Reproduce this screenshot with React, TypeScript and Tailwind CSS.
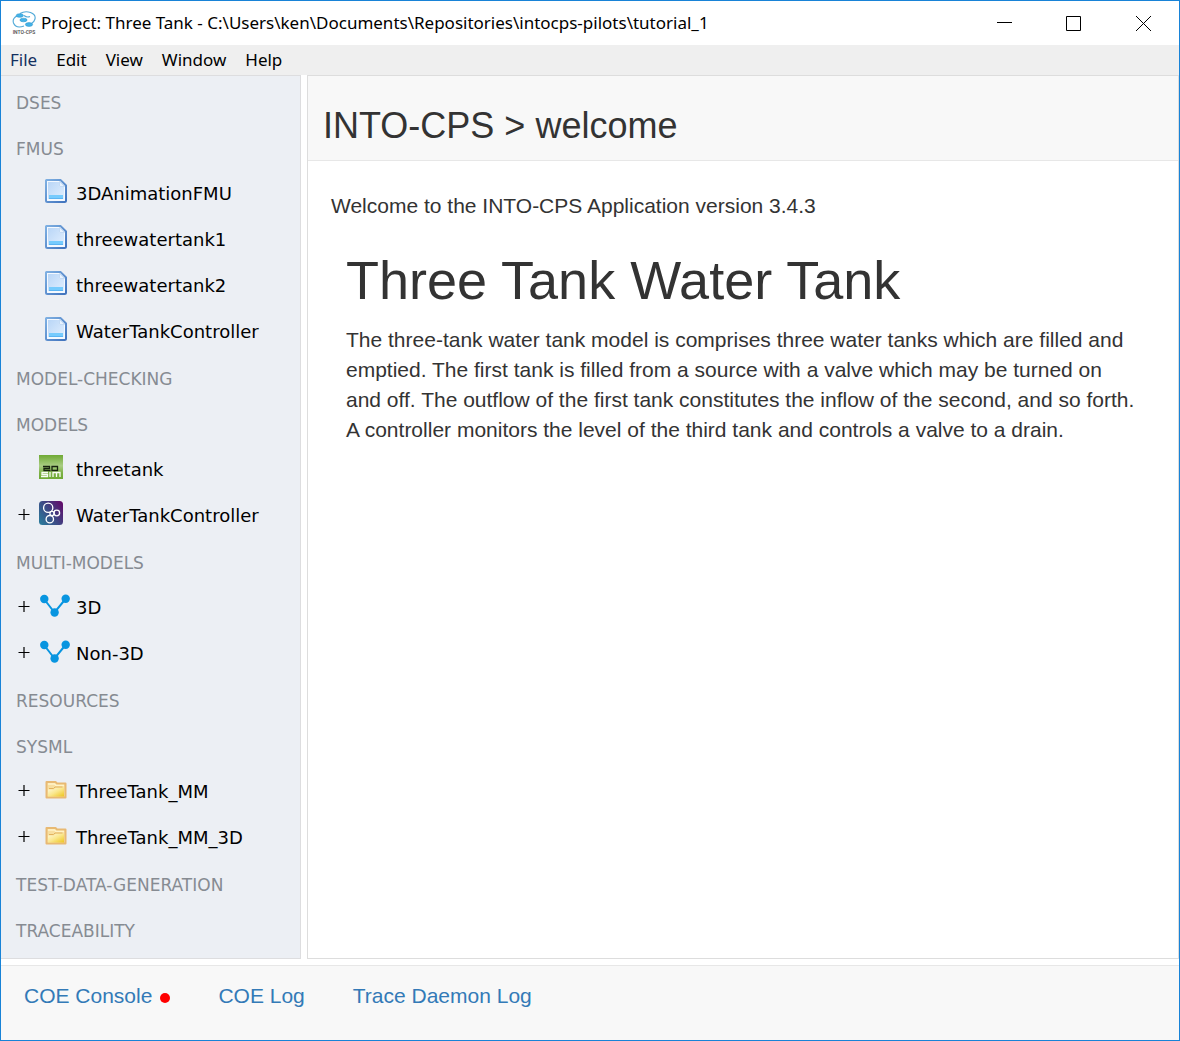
import React from "react";

type IconName = "file" | "sim" | "overture" | "graph" | "folder";
type Item = { label: string; icon: IconName; expandable?: boolean };
type Group = { title: string; items: Item[] };

const groups: Group[] = [
  { title: "DSES", items: [] },
  {
    title: "FMUS",
    items: [
      { label: "3DAnimationFMU", icon: "file" },
      { label: "threewatertank1", icon: "file" },
      { label: "threewatertank2", icon: "file" },
      { label: "WaterTankController", icon: "file" },
    ],
  },
  { title: "MODEL-CHECKING", items: [] },
  {
    title: "MODELS",
    items: [
      { label: "threetank", icon: "sim" },
      { label: "WaterTankController", icon: "overture", expandable: true },
    ],
  },
  {
    title: "MULTI-MODELS",
    items: [
      { label: "3D", icon: "graph", expandable: true },
      { label: "Non-3D", icon: "graph", expandable: true },
    ],
  },
  { title: "RESOURCES", items: [] },
  {
    title: "SYSML",
    items: [
      { label: "ThreeTank_MM", icon: "folder", expandable: true },
      { label: "ThreeTank_MM_3D", icon: "folder", expandable: true },
    ],
  },
  { title: "TEST-DATA-GENERATION", items: [] },
  { title: "TRACEABILITY", items: [] },
];

function FileIcon() {
  return (
    <svg width="22" height="24" viewBox="0 0 22 24" className="ml-1.5" aria-hidden="true">
      <defs>
        <linearGradient id="page" x1="0" y1="0" x2="1" y2="1">
          <stop offset="0" stopColor="#b9d6f7" />
          <stop offset="1" stopColor="#e0eefe" />
        </linearGradient>
        <linearGradient id="pageEdge" x1="0" y1="0" x2="1" y2="1">
          <stop offset="0" stopColor="#7fb0e2" />
          <stop offset="1" stopColor="#3f72bd" />
        </linearGradient>
      </defs>
      <path d="M1.500 1H15.500L21 6.500V21.500Q21 23 19.500 23H2.500Q1 23 1 21.500V1.500Z" fill="#f4f9ff" stroke="url(#pageEdge)" strokeWidth="2" />
      <path d="M3 3H14V8H19V20H3Z" fill="url(#page)" />
      <path d="M14.500 2.500V7.500H19.500Z" fill="#e8f2fe" stroke="#c4dbf5" />
      <path d="M4 16H18V20H4Z" fill="#76cbfd" />
      <path d="M4 19.500H18" stroke="#5cb4f2" />
    </svg>
  );
}

function SimIcon() {
  return (
    <svg width="24" height="24" viewBox="0 0 24 24" aria-hidden="true">
      <defs>
        <linearGradient id="simGreen" x1="0" y1="0" x2="0" y2="1">
          <stop offset="0" stopColor="#6fa934" />
          <stop offset="0.45" stopColor="#a9cd83" />
          <stop offset="0.75" stopColor="#7bb044" />
          <stop offset="1" stopColor="#6faa35" />
        </linearGradient>
      </defs>
      <rect width="24" height="24" fill="url(#simGreen)" />
      <path d="M4 11.500H10.500V13.500H5V15.500H11.500M13 11.500H18.500V15.500H13Z" fill="none" stroke="#17220f" strokeWidth="1.300" />
      <path d="M9 17.500H3V19.500H8.500V21.500H2M11 17V22M14 22V17.500H21V22M17.500 17.500V22" fill="none" stroke="#f8fcf3" strokeWidth="1.300" />
    </svg>
  );
}

function OvertureIcon() {
  return (
    <svg width="24" height="24" viewBox="0 0 24 24" aria-hidden="true">
      <defs>
        <linearGradient id="overture" x1="0" y1="0.8" x2="1" y2="0.1">
          <stop offset="0" stopColor="#2c7799" />
          <stop offset="0.5" stopColor="#3f4583" />
          <stop offset="1" stopColor="#620969" />
        </linearGradient>
      </defs>
      <rect width="24" height="24" rx="3.500" fill="url(#overture)" />
      <g fill="none" stroke="#fff" strokeWidth="1.300">
        <circle cx="9.200" cy="6.800" r="4.600" />
        <circle cx="13" cy="12.500" r="2.100" />
        <circle cx="17.800" cy="12" r="2.800" />
        <circle cx="10.800" cy="18.200" r="3.700" />
      </g>
    </svg>
  );
}

function GraphIcon() {
  return (
    <svg width="30" height="24" viewBox="0 0 30 24" className="ml-px" aria-hidden="true">
      <path d="M4 6L14.500 19.500L25.500 6" fill="none" stroke="#0895e0" strokeWidth="2" />
      <g fill="#0895e0">
        <circle cx="4.300" cy="6" r="4.200" />
        <circle cx="25.700" cy="5.700" r="4.200" />
        <circle cx="14.600" cy="19.500" r="4.200" />
      </g>
    </svg>
  );
}

function FolderIcon() {
  return (
    <svg width="22" height="24" viewBox="0 0 22 24" className="ml-1.5" aria-hidden="true">
      <defs>
        <linearGradient id="folder" x1="0" y1="0" x2="1" y2="1">
          <stop offset="0" stopColor="#fffbe0" />
          <stop offset="0.5" stopColor="#fae78d" />
          <stop offset="1" stopColor="#edc51e" />
        </linearGradient>
      </defs>
      <path d="M1.500 5H10.500L12 6.500H20.500V20.500H1.500Z" fill="#f8dfa0" stroke="#e8b973" strokeWidth="2" strokeLinejoin="round" />
      <path d="M3 7H9.500L11 8.500H19" fill="none" stroke="#fff3c8" strokeWidth="1.500" />
      <path d="M3 12.500H9L11 10.500H19V19.500H3Z" fill="url(#folder)" />
      <path d="M4 11.500H8.500L10 10H17.500" fill="none" stroke="#e2b35c" />
    </svg>
  );
}

const icons: Record<IconName, () => React.JSX.Element> = {
  file: FileIcon,
  sim: SimIcon,
  overture: OvertureIcon,
  graph: GraphIcon,
  folder: FolderIcon,
};

function Logo() {
  return (
    <div className="flex w-6 shrink-0 flex-col items-center">
      <svg width="24" height="18" viewBox="0 0 24 18" aria-hidden="true">
        <g fill="none" stroke="#50a9d8" strokeWidth="1.100">
          <path d="M8 2.500Q13 -0.500 18.500 1.500Q24 3.500 23 8Q22 11.500 19.500 12.500" />
          <path d="M5 5Q0 7.500 1.500 12Q4 18 12 15" />
          <path d="M12 4.500Q15 7 18 5.500" />
        </g>
        <g fill="#43b2e8" stroke="#2f98cf" strokeWidth="0.600">
          <ellipse cx="7.800" cy="4.500" rx="3.600" ry="1.800" />
          <ellipse cx="11.500" cy="9" rx="3.600" ry="1.800" />
          <ellipse cx="17" cy="13.500" rx="3.600" ry="1.900" />
        </g>
      </svg>
      <span className="whitespace-nowrap font-['Roboto',sans-serif] text-[5px] leading-[7px] font-semibold text-[#555]">INTO-CPS</span>
    </div>
  );
}

function TreeItem({ item }: { item: Item }) {
  const Icon = icons[item.icon];
  return (
    <li className="flex h-[46px] items-center pb-0.5 pl-4">
      {item.expandable ? (
        <button type="button" aria-label={`Expand ${item.label}`} className="flex w-[22px] shrink-0 pb-1 text-black">
          <svg width="14" height="14" viewBox="0 0 14 14" aria-hidden="true">
            <path d="M1.500 7.500H12.500M7 2V13" stroke="currentColor" strokeWidth="1.200" />
          </svg>
        </button>
      ) : (
        <span className="w-[22px] shrink-0" />
      )}
      <a href="#" className="flex items-center text-black">
        <span className="flex w-[37px] shrink-0 pb-1.5">
          <Icon />
        </span>
        <span>{item.label}</span>
      </a>
    </li>
  );
}

function TitleBar() {
  return (
    <header className="flex h-11 items-center bg-white pl-[11px] font-['Noto_Sans',sans-serif] text-black">
      <Logo />
      <h1 className="ml-[5px] grow truncate text-[17px] leading-6">
        Project: Three Tank - C:\Users\ken\Documents\Repositories\intocps-pilots\tutorial_1
      </h1>
      <div className="flex shrink-0 self-stretch">
        <button type="button" aria-label="Minimize" className="flex w-[69px] items-center justify-center">
          <svg width="15" height="15" viewBox="0 0 15 15"><path d="M0 6.500H15" stroke="#000" /></svg>
        </button>
        <button type="button" aria-label="Maximize" className="flex w-[69px] items-center justify-center">
          <svg width="15" height="15" viewBox="0 0 15 15"><path d="M.5 .5H14.500V14.500H.5Z" fill="none" stroke="#000" /></svg>
        </button>
        <button type="button" aria-label="Close" className="flex w-[71px] items-center justify-center">
          <svg width="15" height="15" viewBox="0 0 15 15"><path d="M0 0L15 15M15 0L0 15" stroke="#000" /></svg>
        </button>
      </div>
    </header>
  );
}

export default function App() {
  return (
    <div className="flex min-h-screen flex-col border border-[#1883d7] bg-white font-['Liberation_Sans',Arial,sans-serif] text-[#333]">
      <TitleBar />
      <nav aria-label="Menu" className="flex h-[30px] items-center gap-[19px] bg-[#efefef] pl-[9px] font-['Noto_Sans',sans-serif] text-[17px] leading-6 text-black">
        <button type="button" className="text-[#14305f]">File</button>
        <button type="button">Edit</button>
        <button type="button">View</button>
        <button type="button">Window</button>
        <button type="button">Help</button>
      </nav>
      <div className="flex grow gap-1.5">
        <aside className="w-[300px] shrink-0 border-t border-r border-b border-[#dddddf] bg-[#eceff4] py-1 font-['DejaVu_Sans',Verdana,sans-serif] text-[18px] leading-6">
          {groups.map((group) => (
            <section key={group.title}>
              <h2 className="flex h-[46px] items-center pl-[15px] text-[17px] text-[#868b92]">{group.title}</h2>
              <ul>
                {group.items.map((item) => (
                  <TreeItem key={item.label} item={item} />
                ))}
              </ul>
            </section>
          ))}
        </aside>
        <main className="min-w-0 grow border border-[#dddddd]">
          <div className="flex h-[85px] items-end border-b border-[#e7e7e7] bg-[#f8f8f8] px-[15px] pb-[14px]">
            <h2 className="text-[36px] leading-10">INTO-CPS &gt; welcome</h2>
          </div>
          <div className="px-[23px] pt-[30px] text-[21px] leading-[30px]">
            <p>Welcome to the INTO-CPS Application version 3.4.3</p>
            <article className="px-[15px] pt-[29px]">
              <h1 className="text-[54px] leading-[60px]">Three Tank Water Tank</h1>
              <p className="pt-[15px]">
                The three-tank water tank model is comprises three water tanks which are filled and emptied. The first tank is filled from a source with a valve which may be turned on and off. The outflow of the first tank constitutes the inflow of the second, and so forth. A controller monitors the level of the third tank and controls a valve to a drain.
              </p>
            </article>
          </div>
        </main>
      </div>
      <footer className="mt-1.5 flex h-[75px] items-start gap-12 border-t border-[#e7e7e7] bg-[#f8f8f8] px-[23px] pt-[15px] text-[21px] leading-[30px] text-[#337ab7]">
        <a href="#" className="flex items-center gap-2">
          COE Console
          <span className="mt-1 size-2.5 rounded-full bg-[#ff0000]" />
        </a>
        <a href="#">COE Log</a>
        <a href="#">Trace Daemon Log</a>
      </footer>
    </div>
  );
}
